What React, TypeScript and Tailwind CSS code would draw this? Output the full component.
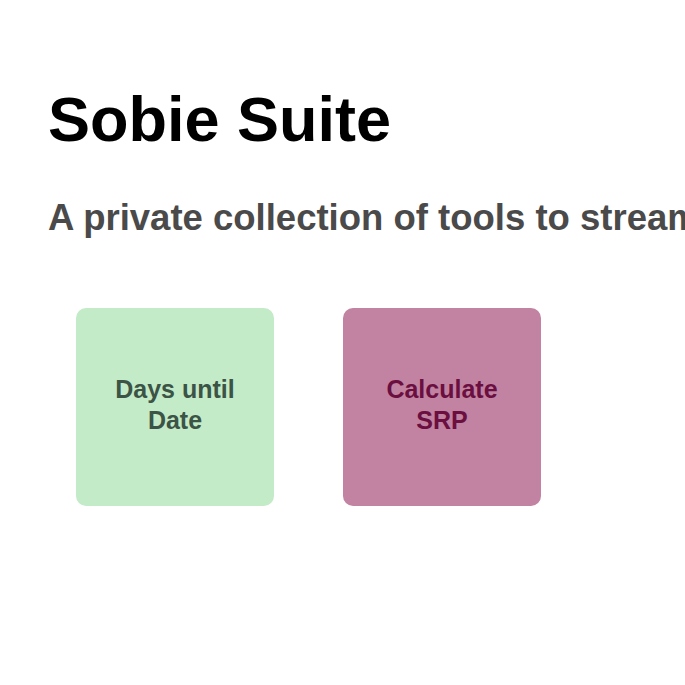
export default function App() {
  return (
    <div className="min-h-screen overflow-hidden bg-white pl-[48px] pt-[81px] font-['Liberation_Sans',Arial,sans-serif]">
      {/* Header */}
      <h1 className="whitespace-nowrap text-[63px] font-bold leading-[76px] text-black">
        Sobie Suite
      </h1>
      <p className="mt-[39px] whitespace-nowrap text-[36.5px] font-bold leading-[44px] text-[#4a4a4a]">
        A private collection of tools to streamline everyday work
      </p>

      {/* Tool tiles */}
      <div className="mt-[68px] flex gap-[69px] pl-[28px]">
        <a
          href="#"
          className="flex h-[198px] w-[198px] items-center justify-center rounded-[10px] bg-[#c4ebc8] px-4 pb-[5px] text-center text-[25px] font-bold leading-[31px] text-[#3b5446]"
        >
          Days until
          <br />
          Date
        </a>
        <a
          href="#"
          className="flex h-[198px] w-[198px] items-center justify-center rounded-[10px] bg-[#c283a3] px-4 pb-[5px] text-center text-[25px] font-bold leading-[31px] text-[#6a0f3f]"
        >
          Calculate
          <br />
          SRP
        </a>
      </div>
    </div>
  );
}
